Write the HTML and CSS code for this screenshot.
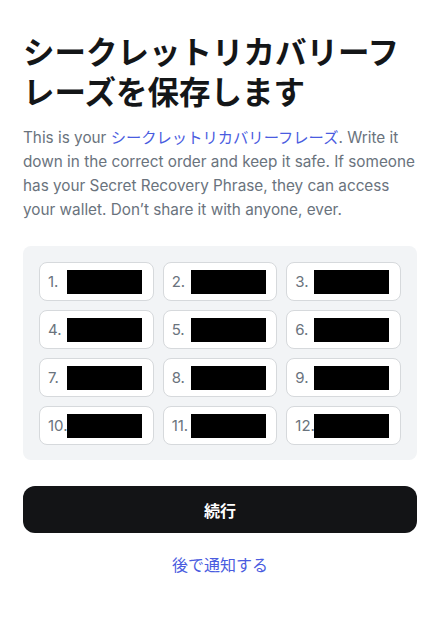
FILE: index.html
```html
<!DOCTYPE html>
<html lang="ja">
<head>
<meta charset="utf-8">
<link rel="stylesheet" href="styles.css">
</head>
<body>
<main class="page">
  <h1 class="title">シークレットリカバリーフレーズを保存します</h1>
  <p class="desc">This is your <a class="link">シークレットリカバリーフレーズ</a>. Write it down in the correct order and keep it safe. If someone has your Secret Recovery Phrase, they can access your wallet. Don’t share it with anyone, ever.</p>
  <div class="phrase">
    <div class="cell"><span class="num">1.</span><span class="mask"></span></div>
    <div class="cell"><span class="num">2.</span><span class="mask"></span></div>
    <div class="cell"><span class="num">3.</span><span class="mask"></span></div>
    <div class="cell"><span class="num">4.</span><span class="mask"></span></div>
    <div class="cell"><span class="num">5.</span><span class="mask"></span></div>
    <div class="cell"><span class="num">6.</span><span class="mask"></span></div>
    <div class="cell"><span class="num">7.</span><span class="mask"></span></div>
    <div class="cell"><span class="num">8.</span><span class="mask"></span></div>
    <div class="cell"><span class="num">9.</span><span class="mask"></span></div>
    <div class="cell"><span class="num">10.</span><span class="mask"></span></div>
    <div class="cell"><span class="num">11.</span><span class="mask"></span></div>
    <div class="cell"><span class="num">12.</span><span class="mask"></span></div>
  </div>
  <button class="primary">続行</button>
  <div class="later"><a class="link">後で通知する</a></div>
</main>
</body>
</html>
```

FILE: styles.css
```css
* { box-sizing: border-box; }
html, body { margin: 0; padding: 0; background: #ffffff; }
body {
  font-family: Inter, "Noto Sans CJK JP", sans-serif;
  color: #24272a;
}
.page {
  padding: 30px 23px 0 23px;
  display: flex;
  flex-direction: column;
}
.title {
  margin: 0;
  font-family: "Noto Sans CJK JP", sans-serif;
  font-weight: 700;
  font-size: 31.5px;
  line-height: 40px;
  color: #141618;
}
.desc {
  margin: 16px 0 0 0;
  font-size: 15.3px;
  line-height: 24px;
  color: #6a737d;
}
.link {
  color: #4a5ce0;
  text-decoration: none;
  font-family: Inter, "Noto Sans CJK JP", sans-serif;
}
.phrase {
  margin-top: 24px;
  background: #f2f4f6;
  border-radius: 8px;
  padding: 16px 16px 15px 16px;
  display: grid;
  grid-template-columns: repeat(3, 1fr);
  gap: 9px;
}
.cell {
  height: 39px;
  background: #ffffff;
  border: 1px solid #d6d9dc;
  border-radius: 8px;
  display: flex;
  align-items: center;
  padding-left: 8px;
}
.num {
  width: 19px;
  flex: none;
  white-space: nowrap;
  font-size: 15px;
  color: #6a737d;
}
.mask {
  flex: none;
  width: 75px;
  height: 24px;
  background: #000000;
}
.primary {
  margin-top: 26px;
  height: 47px;
  border: none;
  border-radius: 12px;
  background: #131416;
  color: #ffffff;
  font-family: "Noto Sans CJK JP", sans-serif;
  font-weight: 700;
  font-size: 16px;
}
.later {
  margin-top: 20px;
  text-align: center;
  font-size: 16px;
  line-height: 24px;
}
```
